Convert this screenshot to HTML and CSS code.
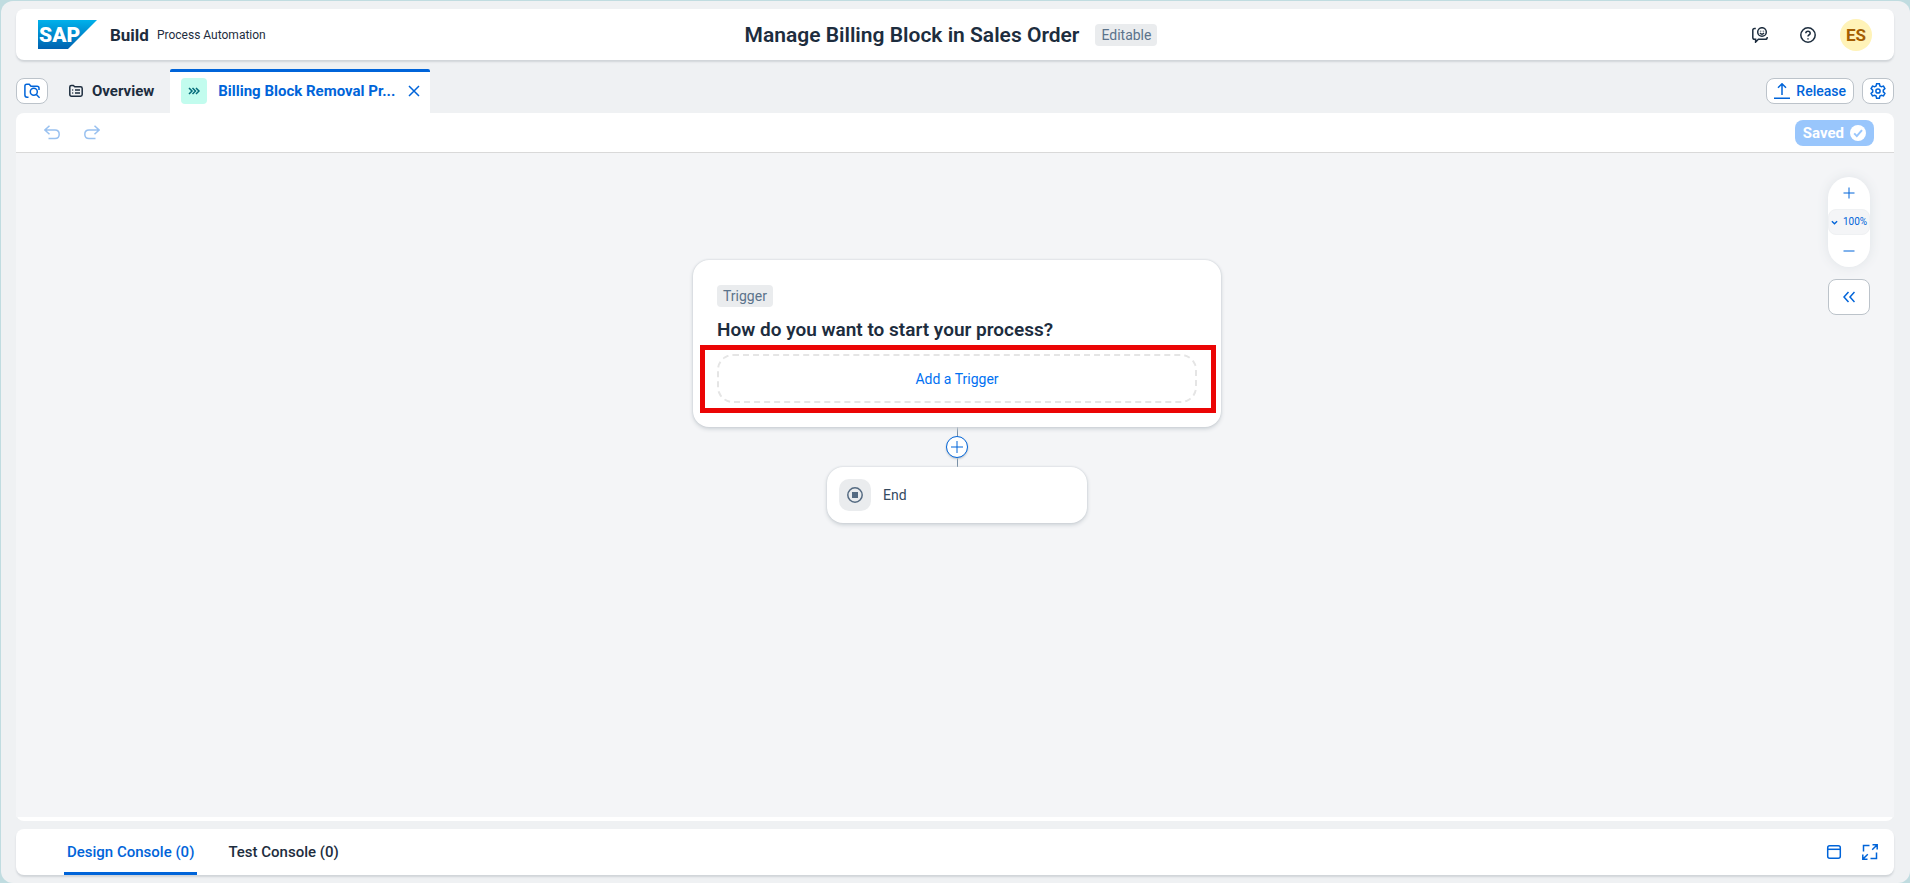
FILE: index.html
```html
<!DOCTYPE html>
<html lang="en">
<head>
<meta charset="utf-8">
<title>Manage Billing Block in Sales Order</title>
<link rel="stylesheet" href="styles.css">
</head>
<body>
<div class="shell">
  <header class="header">
    <div class="brand">
      <svg class="logo" viewBox="0 0 59 30" role="img" aria-label="SAP">
        <defs><linearGradient id="sap" x1="0" y1="0" x2="0" y2="1"><stop offset="0" stop-color="#00b1eb"/><stop offset="1" stop-color="#0062b0"/></linearGradient></defs>
        <path d="M0 0H59L30 29H0Z" fill="url(#sap)"/>
        <text class="logo-text" x="1" y="22">SAP</text>
      </svg>
      <span class="product">Build</span>
      <span class="product-sub">Process Automation</span>
    </div>
    <div class="title-group">
      <h1 class="title">Manage Billing Block in Sales Order</h1>
      <span class="tag">Editable</span>
    </div>
    <div class="header-actions">
      <button class="icon-button dark" aria-label="Feedback">
        <svg class="icon" viewBox="0 0 16 16"><circle cx="10" cy="5" r="4.3"/><path d="M8 6Q10 8.3 12 6M8.6 3.8v.6M11.4 3.8v.6M3.8 1.5H2.6Q.8 1.5.8 3.3v7.2q0 1.800 1.800 1.800h1v2.800l2.800-2.800h7q1.800 0 1.800-1.800v-.4"/></svg>
      </button>
      <button class="icon-button dark" aria-label="Help">
        <svg class="icon" viewBox="0 0 16 16"><circle cx="8" cy="8" r="7.200"/><path d="M5.800 6.200Q5.900 4.200 8 4.200t2.200 2Q10.200 7.300 8.900 8 8 8.500 8 9.600M8 11.200v1.300"/></svg>
      </button>
      <button class="avatar" aria-label="Profile">ES</button>
    </div>
  </header>

  <nav class="tabbar" aria-label="Open artifacts">
    <button class="outline-button square" aria-label="Search project">
      <svg class="icon" viewBox="0 0 16 16"><path d="M4.500 14.200H3Q.9 14.200.9 12.100V3Q.9 1.200 2.700 1.200h2.500l1.800 2h6q2 0 2 2V7"/><circle cx="9.800" cy="8.800" r="3.500"/><path d="M12.400 11.400 15.600 14.800"/></svg>
    </button>
    <button class="tab overview">
      <svg class="icon small" viewBox="0 0 14 14"><path d="M.8 10.500V3Q.8 1.500 2.300 1.500h2l1.500 1.300h5.700q1.700 0 1.700 1.700v6q0 1.700-1.700 1.700h-9Q.8 12.200.8 10.500ZM3.200 6h1M6 6h5M3.200 9h1M6 9h5"/></svg>
      Overview
    </button>
    <div class="tab active">
      <span class="tab-badge"><svg class="chevrons" viewBox="0 0 12 8"><path d="M1 1 4 4 1 7M4.500 1l3 3-3 3M8 1l3 3-3 3"/></svg></span>
      <a class="tab-link" href="#process">Billing Block Removal Pr...</a>
      <button class="icon-button close" aria-label="Close tab"><svg class="icon close-icon" viewBox="0 0 12 12"><path d="M1 1 11 11M11 1 1 11"/></svg></button>
    </div>
    <div class="tabbar-actions">
      <button class="outline-button release">
        <svg class="icon" viewBox="0 0 16 16"><path d="M8 12V1M4 4.800 8 .8l4 4M0 15.200h16"/></svg>
        Release
      </button>
      <button class="outline-button square" aria-label="Settings">
        <svg class="icon" viewBox="0 0 16 16"><path d="M6.600.8h2.800l.5 2.100 1.500.9 2.100-.7 1.400 2.500L13.300 7.100v1.800l1.600 1.500-1.400 2.500-2.100-.7-1.500.9-.5 2.100H6.600l-.5-2.100-1.500-.9-2.100.7-1.400-2.500L2.700 8.900V7.100L1.100 5.600l1.400-2.500 2.100.7 1.500-.9Z"/><circle cx="8" cy="8" r="2.100"/></svg>
      </button>
    </div>
  </nav>

  <main class="panel" id="process">
    <div class="toolbar">
      <button class="icon-button faded" aria-label="Undo" disabled><svg class="icon" viewBox="0 0 16 16"><path d="M5.500.8.9 5l4.600 4.200M1 5h10q4.200 0 4.200 4.300T11 13.600H4.500"/></svg></button>
      <button class="icon-button faded" aria-label="Redo" disabled><svg class="icon" viewBox="0 0 16 16"><path d="M10.500.8 15.100 5l-4.600 4.200M15 5H5Q.8 5 .8 9.300T5 13.600h6.500"/></svg></button>
      <button class="saved" disabled>Saved
        <svg class="icon" viewBox="0 0 16 16"><circle cx="8" cy="8" r="8" class="check-disc"/><path d="m4.200 8.400 2.600 2.700 5.200-6" class="check-mark"/></svg>
      </button>
    </div>
    <div class="canvas">
      <div class="flow">
        <section class="trigger-card">
          <span class="tag">Trigger</span>
          <h2 class="question">How do you want to start your process?</h2>
          <button class="add-trigger">Add a Trigger</button>
          <div class="highlight"></div>
        </section>
        <div class="connector">
          <button class="add-step" aria-label="Add step"><svg class="plus" viewBox="0 0 12 12"><path d="M6 0v12M0 6h12"/></svg></button>
        </div>
        <section class="end-card">
          <span class="end-icon"><svg class="icon" viewBox="0 0 16 16"><circle cx="8" cy="8" r="7.200"/><path class="stop" d="M5 5h6v6H5Z"/></svg></span>
          End
        </section>
      </div>
      <div class="canvas-tools">
        <div class="zoom">
          <button class="zoom-button" aria-label="Zoom in"><svg class="zoom-icon" viewBox="0 0 12 12"><path d="M6 .5v11M.5 6h11"/></svg></button>
          <button class="zoom-level"><svg class="caret" viewBox="0 0 8 5"><path d="M1 1 4 4 7 1"/></svg>100%</button>
          <button class="zoom-button" aria-label="Zoom out"><svg class="zoom-icon" viewBox="0 0 12 12"><path d="M.5 6h11"/></svg></button>
        </div>
        <button class="expand" aria-label="Expand panel"><svg class="icon close-icon" viewBox="0 0 12 12"><path d="M5.500 1 1 6l4.500 5M11.500 1 7 6l4.500 5"/></svg></button>
      </div>
    </div>
  </main>

  <footer class="console">
    <button class="console-tab selected">Design Console (0)</button>
    <button class="console-tab">Test Console (0)</button>
    <div class="console-actions">
      <button class="icon-button" aria-label="Dock console"><svg class="icon" viewBox="0 0 16 16"><rect x="1.700" y="1.700" width="12.600" height="12.600" rx="2"/><path d="M1.700 5.300h12.600"/></svg></button>
      <button class="icon-button" aria-label="Full screen"><svg class="icon" viewBox="0 0 16 16"><path d="M7.500 1.500h-6v6M8.500 14.500h6v-6M10.500.8h4.700v4.700M15 1l-4.800 4.800M5.500 15.200H.8v-4.700M1 15l4.800-4.800"/></svg></button>
    </div>
  </footer>
</div>
</body>
</html>
```
FILE: styles.css
```css
* { box-sizing: border-box; }

body {
  margin: 0;
  background: #c0dce0;
  color: #1d2d3e;
  font: 14px/20px Roboto, "Liberation Sans", sans-serif;
}

button {
  margin: 0;
  padding: 0;
  border: 0;
  background: none;
  color: #0064d9;
  font: inherit;
  cursor: pointer;
}

h1, h2 { margin: 0; }

.icon, .chevrons, .plus, .zoom-icon, .caret {
  display: block;
  flex: none;
  width: 16px;
  height: 16px;
  fill: none;
  stroke: currentColor;
  stroke-width: 1.5;
}

.shell {
  display: flex;
  flex-direction: column;
  min-height: calc(100vh - 1px);
  margin: 1px 0 0 1px;
  padding: 8px 16px 8px 15px;
  border-radius: 12px;
  background: #eff1f3;
}

/* Header */
.header {
  display: grid;
  grid-template-columns: 1fr auto 1fr;
  align-items: center;
  height: 51px;
  padding: 0 22px;
  border-radius: 8px;
  background: #fff;
  box-shadow: 0 2px 2px #d0d4d8;
}

.brand { display: flex; align-items: center; }
.logo { width: 59px; height: 30px; }
.logo-text { fill: #fff; font: 900 21px Roboto, sans-serif; }
.product { margin-left: 13px; font-size: 17px; font-weight: 700; }
.product-sub { margin-left: 8px; font-size: 12px; }

.title-group { display: flex; align-items: center; gap: 16px; padding-right: 8px; }
.title { font-size: 21px; line-height: 24px; font-weight: 600; }

.tag {
  padding: 0 6px;
  border-radius: 4px;
  background: #eaecee;
  color: #5b738b;
  font-size: 14px;
  line-height: 22px;
}

.header-actions { display: flex; align-items: center; justify-content: flex-end; gap: 16px; }
.icon-button { display: grid; place-items: center; width: 32px; height: 26px; }
.dark { color: #1d2d3e; }
.avatar {
  width: 32px;
  height: 32px;
  border-radius: 50%;
  background: #fff3b8;
  color: #a45d00;
  font-size: 17px;
  font-weight: 700;
}

/* Artifact tabs */
.tabbar { display: flex; align-items: center; height: 44px; margin-top: 9px; }
.outline-button {
  display: flex;
  align-items: center;
  justify-content: center;
  gap: 6px;
  height: 26px;
  padding: 0 7px;
  border: 1px solid #bcc3ca;
  border-radius: 8px;
  background: #fff;
  font-size: 14px;
  font-weight: 500;
}
.square { width: 32px; padding: 0; }

.tab { display: flex; align-items: center; font-size: 15px; font-weight: 700; }
.overview { gap: 9px; margin: 0 16px 0 21px; color: #1d2d3e; }
.small { width: 14px; height: 14px; }
.active {
  align-self: stretch;
  width: 260px;
  padding: 0 0 3px 11px;
  border-top: 3px solid #0064d9;
  border-radius: 2px 2px 0 0;
  background: #fff;
}
.tab-badge {
  display: grid;
  place-items: center;
  width: 26px;
  height: 26px;
  border-radius: 4px;
  background: #c2fcee;
  color: #046c7a;
}
.chevrons { width: 12px; height: 8px; }
.tab-link { flex: 1; margin-left: 11px; color: #0064d9; text-decoration: none; white-space: nowrap; }
.close-icon { width: 12px; height: 12px; }
.tabbar-actions { display: flex; gap: 8px; margin-left: auto; }

/* Editor */
.panel {
  display: flex;
  flex: 1;
  flex-direction: column;
  padding-bottom: 4px;
  border-radius: 8px;
  background: #fff;
}
.toolbar {
  display: flex;
  align-items: center;
  gap: 8px;
  height: 40px;
  padding: 0 20px;
  border-bottom: 1px solid #d9d9d9;
}
.faded { color: #99c1f0; }
.saved {
  display: flex;
  align-items: center;
  gap: 6px;
  height: 26px;
  margin-left: auto;
  padding: 0 8px;
  border-radius: 8px;
  background: #99c6fc;
  color: #fff;
  font-size: 15px;
  font-weight: 700;
}
.check-disc { fill: #fff; stroke: none; }
.check-mark { stroke: #99c6fc; stroke-width: 2; }

.canvas { position: relative; flex: 1; padding: 107px 0 24px 4px; background: #f4f5f7; }
.flow { display: flex; flex-direction: column; align-items: center; }

.trigger-card, .end-card {
  border-radius: 16px;
  background: #fff;
  box-shadow: 0 0 2px #c4cad0, 0 2px 4px #ccd1d6;
}
.trigger-card {
  position: relative;
  display: flex;
  flex-direction: column;
  align-items: flex-start;
  width: 528px;
  padding: 25px 24px 24px;
}
.question { margin: 11px 0 12px; font-size: 19px; line-height: 24px; font-weight: 600; }
.add-trigger {
  align-self: stretch;
  height: 49px;
  border: 2px dashed #e5e5e5;
  border-radius: 16px;
  color: #0070f2;
}
.highlight {
  position: absolute;
  inset: 85px 5px 14px 7px;
  border: 5px solid #eb0505;
  pointer-events: none;
}

.connector {
  display: grid;
  place-items: center;
  width: 22px;
  height: 40px;
  background: linear-gradient(#788fa6, #788fa6) center / 1px 100% no-repeat;
}
.add-step {
  display: grid;
  place-items: center;
  width: 22px;
  height: 22px;
  border: 1px solid #0064d9;
  border-radius: 50%;
  background: #fff;
  box-shadow: 0 1px 2px #bcc3ca;
}
.plus { width: 12px; height: 12px; stroke-width: 1; }

.end-card { display: flex; align-items: center; gap: 12px; width: 260px; height: 56px; padding: 0 12px; color: #354a5f; }
.end-icon {
  display: grid;
  place-items: center;
  width: 32px;
  height: 32px;
  border-radius: 10px;
  background: #eaecee;
  color: #556b82;
}
.stop { fill: currentColor; stroke: none; }

.canvas-tools { position: absolute; top: 24px; right: 24px; display: grid; gap: 12px; width: 42px; }
.zoom { border-radius: 21px; background: #fff; box-shadow: 0 0 12px #dfe3e7; }
.zoom-button { display: grid; place-items: center; width: 42px; height: 32px; }
.zoom-icon { width: 12px; height: 12px; stroke-width: 1; }
.zoom-level {
  display: flex;
  align-items: center;
  justify-content: center;
  gap: 5px;
  width: 42px;
  height: 26px;
  border: 1px solid #eff1f3;
  border-radius: 8px;
  background: #f4f5f7;
  font-size: 10px;
}
.caret { width: 7px; height: 5px; }
.expand {
  display: grid;
  place-items: center;
  height: 36px;
  border: 1px solid #bcc3ca;
  border-radius: 8px;
  background: #fff;
}

/* Console */
.console {
  display: flex;
  height: 46px;
  margin-top: 8px;
  padding: 0 8px 0 48px;
  border-radius: 8px;
  background: #fff;
  box-shadow: 0 2px 2px #d0d4d8;
}
.console-tab {
  margin-right: 28px;
  padding: 2px 3px 0;
  border-bottom: 3px solid transparent;
  color: #1d2d3e;
  font-size: 15px;
  font-weight: 500;
}
.selected { border-color: #0064d9; color: #0064d9; }
.console-actions { display: flex; align-items: center; gap: 4px; margin-left: auto; }
```
